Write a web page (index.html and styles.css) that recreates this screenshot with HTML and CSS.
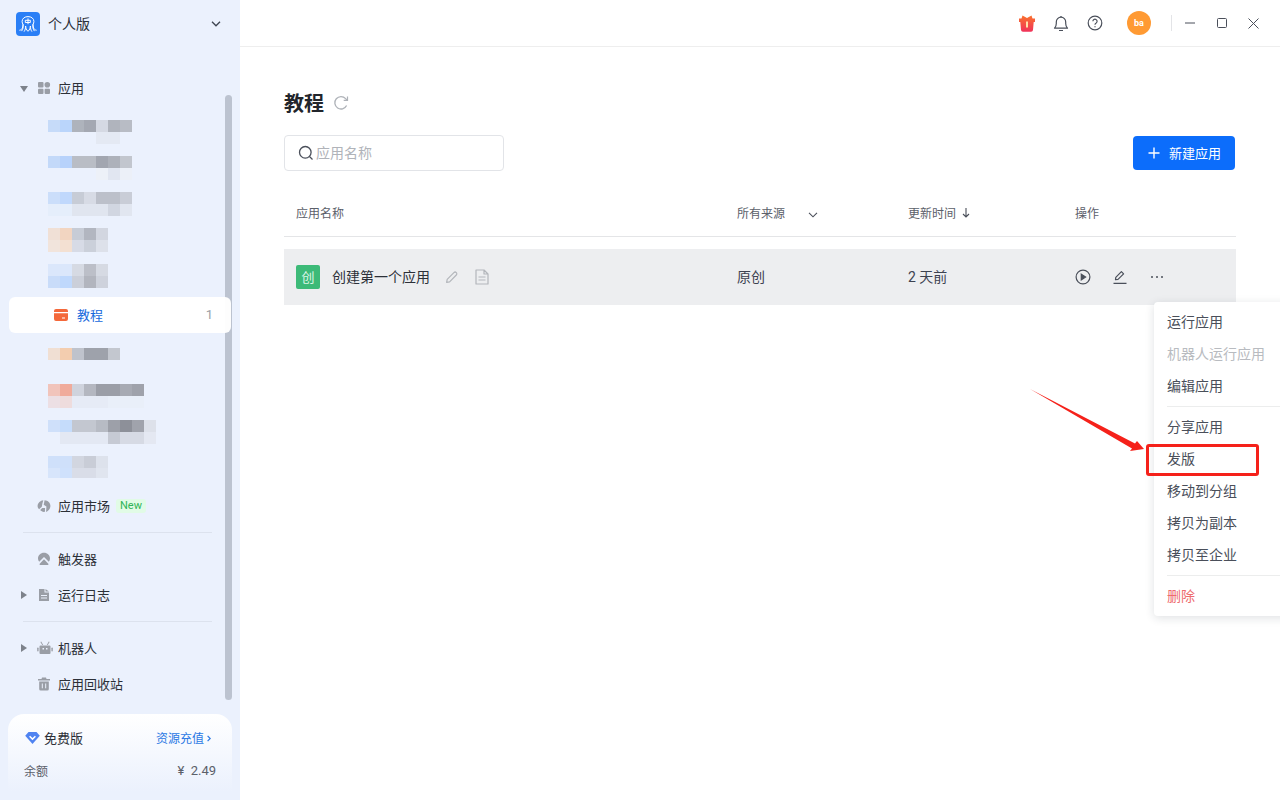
FILE: index.html
```html
<!DOCTYPE html>
<html lang="zh-CN">
<head>
<meta charset="UTF-8">
<title>教程</title>
<link rel="stylesheet" href="styles.css">
</head>
<body>
<div class="app">

	<!-- 左侧导航 -->
	<aside class="sidebar">
		<div class="brand">
			<span class="logo">
				<svg width="24" height="24" viewBox="0 0 24 24" fill="none" stroke="#fff" stroke-width="1" stroke-linecap="round" stroke-linejoin="round"><path d="M7 12.5c-.6-1-.9-2-.9-3.100C6.100 6.500 8.700 4.600 12 4.600s5.900 1.900 5.900 4.800c0 1.100-.3 2.100-.9 3.100"/><path d="M12 6.800v5M9.700 8.300h4.600v2.200H9.700z"/><path d="M3.800 18.200c1.900-.3 3-1.700 3.200-5.700.4 2.300.1 4.600-1.200 6.300M8.300 19.300c1-1.500 1.300-3.100 1.300-5.300.3 1.800.5 3.700 2.400 5.300 1.900-1.600 2.100-3.500 2.400-5.300 0 2.200.3 3.800 1.300 5.300M18.200 18.800c-1.300-1.700-1.600-4-1.200-6.300.2 4 1.300 5.400 3.200 5.700"/></svg>
			</span>
			<span class="brand-name">个人版</span>
			<svg class="brand-arrow" width="10" height="6" viewBox="0 0 10 6" fill="none" stroke="#3d4450" stroke-width="1.300"><path d="M1 .8l4 4 4-4"/></svg>
		</div>

		<nav class="nav">
			<div class="nav-row">
				<span class="tri tri-down"></span>
				<svg class="nav-icon" width="14" height="14" viewBox="0 0 14 14" fill="#9a9ea6"><rect x="1" y="1" width="5.500" height="5.500" rx="1"/><circle cx="10.300" cy="3.700" r="2.800"/><rect x="1" y="7.800" width="5.500" height="5.200" rx="1"/><rect x="7.600" y="7.800" width="5.400" height="5.200" rx="1"/></svg>
				<span>应用</span>
			</div>

			<div class="groups">
				<div class="group-row"><div class="mosaic mosaic-1"></div></div>
				<div class="group-row"><div class="mosaic mosaic-2"></div></div>
				<div class="group-row"><div class="mosaic mosaic-3"></div></div>
				<div class="group-row"><div class="mosaic mosaic-4"></div></div>
				<div class="group-row"><div class="mosaic mosaic-5"></div></div>
				<div class="group-row group-active">
					<svg width="14" height="12" viewBox="0 0 14 12"><path fill="#f4683a" d="M0 2a2 2 0 0 1 2-2h10a2 2 0 0 1 2 2v1H0zM0 4.200h14V10a2 2 0 0 1-2 2H2a2 2 0 0 1-2-2z"/><rect x="8" y="8.500" width="3" height="1" fill="#fff"/></svg>
					<span class="group-name">教程</span>
					<span class="group-count">1</span>
				</div>
				<div class="group-row group-low"><div class="mosaic mosaic-6"></div></div>
				<div class="group-row group-low"><div class="mosaic mosaic-7"></div></div>
				<div class="group-row group-low"><div class="mosaic mosaic-8"></div></div>
				<div class="group-row group-low"><div class="mosaic mosaic-9"></div></div>
			</div>

			<div class="nav-row">
				<svg class="nav-icon" width="14" height="14" viewBox="0 0 14 14" fill="#9a9ea6"><path d="M6.300 1.200C3.300 1.500.8 3.900.6 6.800c-.1 1.400.5 2.700 1.500 3.500l2.700-2.500.6-3.200zM7.600 1.300l-.9 4.400 2.700 1.700-.3 5.500c2.600-1 4.300-3.300 4.300-6.200 0-2.800-2.500-5.100-5.800-5.400zM5.200 9l-2 1.900c.9 1.100 2.300 1.800 3.800 2l.9-.1.200-3.800z"/></svg>
				<span>应用市场</span>
				<span class="tag-new">New</span>
			</div>

			<div class="nav-line"></div>

			<div class="nav-row">
				<svg class="nav-icon" width="14" height="14" viewBox="0 0 14 14" fill="#9a9ea6"><path d="M7 .8C3.600.8 1 3.300 1 6.400c0 1.300.4 2.400 1.200 3.300L7 5l4.800 4.700c.8-.9 1.200-2 1.200-3.300C13 3.300 10.400.8 7 .8z"/><path d="M7 7.300L2.500 12c0 .6.400 1 1 1h7c.6 0 1-.4 1-1z"/></svg>
				<span>触发器</span>
			</div>
			<div class="nav-row">
				<span class="tri tri-right"></span>
				<svg class="nav-icon" width="14" height="14" viewBox="0 0 14 14" fill="#9a9ea6" fill-rule="evenodd"><path d="M2 1h5.500v3.500H12V13H2zM4 7v1h6V7zm0 2.500v1h6v-1z"/><path d="M8.500 1L12 3.500H8.500z"/></svg>
				<span>运行日志</span>
			</div>

			<div class="nav-line"></div>

			<div class="nav-row">
				<span class="tri tri-right"></span>
				<svg class="nav-icon" width="16" height="14" viewBox="0 0 16 14" fill="#9a9ea6" fill-rule="evenodd"><path d="M3.500 4.500h9a1 1 0 0 1 1 1v6.500a1 1 0 0 1-1 1h-9a1 1 0 0 1-1-1V5.500a1 1 0 0 1 1-1zM5.500 7v1.500h1.500V7zm3.500 0v1.500h1.500V7z"/><rect x=".2" y="6.500" width="1.400" height="4" rx=".7"/><rect x="14.400" y="6.500" width="1.400" height="4" rx=".7"/><path d="M4.200 .6l2 3.400h-1L3.400 1zM11.800 .6l-2 3.400h1L12.600 1z"/></svg>
				<span>机器人</span>
			</div>
			<div class="nav-row">
				<svg class="nav-icon" width="14" height="14" viewBox="0 0 14 14" fill="#9a9ea6"><path d="M5 .6h4l.5 1.400H13v1.400H1V2h3.500z"/><path d="M2.200 4.500h9.600V12a1.500 1.500 0 0 1-1.500 1.500H3.700A1.500 1.500 0 0 1 2.200 12z"/><path d="M5.300 6.500v4.800M8.700 6.500v4.800" stroke="#ebf1fd" stroke-width="1"/></svg>
				<span>应用回收站</span>
			</div>
		</nav>

		<div class="scrollbar"></div>

		<div class="plan">
			<div class="plan-top">
				<svg width="15" height="12" viewBox="0 0 15 12"><path fill="#4f83f1" d="M3.500 0h8l3.300 3.700L7.500 12 .2 3.700z"/><path d="M4.600 4.300l2.900 2.800 2.900-2.800" fill="none" stroke="#fff" stroke-width="1.500"/></svg>
				<span class="plan-name">免费版</span>
				<span class="plan-link">资源充值</span>
				<svg width="4" height="7" viewBox="0 0 4 7" fill="none" stroke="#2a78e4" stroke-width="1.200"><path d="M.6.800l2.600 2.700L.6 6.200"/></svg>
			</div>
			<div class="plan-bottom">
				<span>余额</span>
				<span class="plan-money">¥ 2.49</span>
			</div>
		</div>
	</aside>

	<!-- 右侧主体 -->
	<div class="body-wrap">
		<header class="topbar">
			<svg class="top-gift" width="16" height="17" viewBox="0 0 16 17"><defs><linearGradient id="gift" x1="0" y1="0" x2="0" y2="1"><stop offset="0" stop-color="#f9722d"/><stop offset="1" stop-color="#f0325a"/></linearGradient></defs><path fill="url(#gift)" d="M3.500.5L8 3 12.500.5l1 3H16v3.500h-1.300l-.7 8a2 2 0 0 1-2 1.800H4a2 2 0 0 1-2-1.800l-.7-8H0V3.500h2.500z"/><rect x="7" y="6.500" width="2" height="6" fill="#ffe1a8"/></svg>
			<svg class="top-icon" width="16" height="17" viewBox="0 0 16 17" fill="none" stroke="#4a4f5a" stroke-width="1.200" stroke-linejoin="round"><path d="M1.500 13.200h13c-1.300-1.200-1.800-2.300-1.800-4.700V7A4.700 4.700 0 0 0 8 2.200 4.700 4.700 0 0 0 3.300 7v1.500c0 2.400-.5 3.500-1.800 4.700z"/><path d="M6 15.500h4M8 1v1.200"/></svg>
			<svg class="top-icon" width="16" height="16" viewBox="0 0 16 16" fill="none" stroke="#4a4f5a" stroke-width="1.200"><circle cx="8" cy="8" r="6.800"/><path d="M5.900 6.300a2.100 2.100 0 1 1 3.300 1.700c-.8.500-1.200 1-1.200 1.800"/><path d="M8 11.200v1.100" stroke-width="1.300"/></svg>
			<span class="avatar">ba</span>
			<span class="top-line"></span>
			<svg class="win-min" width="10" height="10" viewBox="0 0 10 10" fill="none" stroke="#4a4f5a"><path d="M0 5h10"/></svg>
			<svg class="win-max" width="10" height="10" viewBox="0 0 10 10" fill="none" stroke="#4a4f5a"><rect x=".5" y=".5" width="9" height="9" rx="1"/></svg>
			<svg class="win-close" width="11" height="11" viewBox="0 0 11 11" fill="none" stroke="#4a4f5a"><path d="M.5.500l10 10M10.500.5l-10 10"/></svg>
		</header>

		<main class="content">
			<div class="title-line">
				<h1>教程</h1>
				<svg width="16" height="16" viewBox="0 0 16 16" fill="none" stroke="#aeb2b8" stroke-width="1.300"><path d="M13.600 10.500A6.200 6.200 0 1 1 12.600 3.600L14 5"/><path d="M14.500 1.600V5.400h-3.800" stroke-width="1.200"/></svg>
			</div>

			<div class="toolbar">
				<div class="search">
					<svg width="16" height="16" viewBox="0 0 16 16" fill="none" stroke="#4a4f5a" stroke-width="1.300"><circle cx="7.300" cy="7.300" r="5.800"/><path d="M11.500 11.500l3 3"/></svg>
					<span>应用名称</span>
				</div>
				<div class="btn-new">
					<svg width="14" height="14" viewBox="0 0 14 14" stroke="#fff" stroke-width="1.400"><path d="M7 1.500v11M1.500 7h11"/></svg>
					<span>新建应用</span>
				</div>
			</div>

			<div class="table-head">
				<div class="col-name">应用名称</div>
				<div class="col-source">所有来源
					<svg width="10" height="6" viewBox="0 0 10 6" fill="none" stroke="#4a4f5a" stroke-width="1.100"><path d="M1 .8l4 4 4-4"/></svg>
				</div>
				<div class="col-time">更新时间
					<svg width="8" height="10" viewBox="0 0 8 10" fill="none" stroke="#4a4f5a" stroke-width="1.100"><path d="M4 0v9M1 6l3 3 3-3"/></svg>
				</div>
				<div class="col-op">操作</div>
			</div>

			<div class="table-row">
				<div class="col-name">
					<span class="badge">创</span>
					<span class="app-name">创建第一个应用</span>
					<svg class="row-pen" width="14" height="14" viewBox="0 0 14 14" fill="none" stroke="#b3b6bb" stroke-width="1.200" stroke-linejoin="round"><path d="M1.600 12.400l.6-3.100 6.700-6.700a1.600 1.600 0 0 1 2.400 2.400l-6.700 6.800z"/></svg>
					<svg class="row-doc" width="14" height="16" viewBox="0 0 14 16" fill="none" stroke="#b3b6bb" stroke-width="1.200" stroke-linejoin="round"><path d="M1 1h8l4 4v10H1zM9 1v4h4M3.500 8h7M3.500 11h7"/></svg>
				</div>
				<div class="col-source">原创</div>
				<div class="col-time">2 天前</div>
				<div class="col-op row-ops">
					<svg width="16" height="16" viewBox="0 0 16 16" fill="none" stroke="#4a4f5a" stroke-width="1.200"><circle cx="8" cy="8" r="6.900"/><path d="M6.300 5.200l4.300 2.800-4.300 2.800z" fill="#4a4f5a"/></svg>
					<svg width="14" height="14" viewBox="0 0 14 14" fill="none" stroke="#4a4f5a" stroke-width="1.200" stroke-linejoin="round"><path d="M2.500 9.600l.3-2.300L8.400 1.700l2.200 2.200-5.600 5.500zM.5 13.300h13"/></svg>
					<svg width="16" height="4" viewBox="0 0 16 4" fill="#4a4f5a"><circle cx="3" cy="2" r="1"/><circle cx="8" cy="2" r="1"/><circle cx="13" cy="2" r="1"/></svg>
				</div>
			</div>
		</main>
	</div>

	<!-- 更多操作菜单 -->
	<ul class="menu">
		<li>运行应用</li>
		<li class="menu-off">机器人运行应用</li>
		<li>编辑应用</li>
		<li class="menu-line"></li>
		<li>分享应用</li>
		<li>发版</li>
		<li>移动到分组</li>
		<li>拷贝为副本</li>
		<li>拷贝至企业</li>
		<li class="menu-line"></li>
		<li class="menu-del">删除</li>
	</ul>

	<!-- 标注 -->
	<svg class="mark-arrow" width="130" height="80" viewBox="0 0 130 80"><path fill="#f5211a" d="M0 0L105 54.500 107 52l7 8-14 2 2-2.500z"/></svg>
	<div class="mark-box"></div>
</div>
</body>
</html>
```

FILE: styles.css
```css
* {
	box-sizing: border-box;
}

body, h1, ul, li {
	margin: 0;
	padding: 0;
}

body {
	font-family: Roboto, "Noto Sans CJK SC", sans-serif;
	font-size: 13px;
	color: #2c3038;
	background: #fff;
}

.app {
	position: relative;
	display: flex;
	width: 1280px;
	height: 800px;
	overflow: hidden;
}

/* 左侧导航 */
.sidebar {
	position: relative;
	display: flex;
	flex-direction: column;
	flex: 0 0 240px;
	height: 800px;
	background: #ebf1fd;
}

.brand {
	display: flex;
	align-items: center;
	height: 48px;
	margin-bottom: 22px;
	padding: 0 19px 0 16px;
}

.logo {
	display: flex;
	width: 24px;
	height: 24px;
	border-radius: 4px;
	background: #2a7ff6;
}

.brand-name {
	flex: 1;
	margin-left: 8px;
	padding-bottom: 2px;
	font-size: 14px;
}

.nav {
	position: relative;
	z-index: 1;
}

.nav-row {
	position: relative;
	display: flex;
	align-items: center;
	height: 36px;
	padding: 0 0 2px 58px;
}

.nav-icon {
	position: absolute;
	left: 37px;
	top: 11px;
}

.tri {
	position: absolute;
	width: 0;
	height: 0;
	border-style: solid;
	border-color: transparent;
}

.tri-down {
	left: 20px;
	top: 16px;
	border-width: 6px 4.500px 0;
	border-top-color: #7d828b;
}

.tri-right {
	left: 21px;
	top: 14px;
	border-width: 4.500px 0 4.500px 6px;
	border-left-color: #7d828b;
}

.groups {
	margin: 11px 0;
}

.group-row {
	height: 36px;
	padding: 3px 0 0 48px;
}

.group-low {
	padding-top: 15px;
}

.group-active {
	display: flex;
	align-items: center;
	margin: 0 9px;
	padding: 0 18px 0 45px;
	border-radius: 6px;
	background: rgba(255, 255, 255, .96);
}

.group-name {
	flex: 1;
	margin-left: 9px;
	padding-bottom: 2px;
	color: #1668dc;
}

.group-count {
	padding-bottom: 2px;
	font-size: 13px;
	color: #9a9ea6;
}

.tag-new {
	margin: 2px 0 0 6px;
	padding: 0 4px;
	border-radius: 3px;
	font-size: 11px;
	line-height: 14px;
	color: #2fb457;
	background: #e1fbe6;
}

.nav-line {
	height: 1px;
	margin: 8px 28px 8px 23px;
	background: #dce2ee;
}

.scrollbar {
	position: absolute;
	left: 225px;
	top: 95px;
	width: 7px;
	height: 605px;
	border-radius: 4px;
	background: #bcc3d0;
}

/* 모자이크 처리된 그룹명 */
.mosaic {
	height: 24px;
	background-repeat: no-repeat;
	background-size: 100% 12px;
	background-position: top, bottom;
}

.mosaic-1 {
	width: 84px;
	background-image:
		linear-gradient(90deg, #c6dbf9 12px, #bad5fb 12px 24px, #aeb3bc 24px 36px, #a4a8b2 36px 48px, #d5d9e3 48px 60px, #b0b4bd 60px 72px, #b8bcc5 72px),
		linear-gradient(90deg, transparent 48px, #e4e9f3 48px 72px, transparent 72px);
}

.mosaic-2 {
	width: 84px;
	background-image:
		linear-gradient(90deg, #c3d9f9 12px, #b7d2fb 12px 24px, #b9bdc5 24px 48px, #a2a6b0 48px 60px, #adb1ba 60px 72px, #c2c6ce 72px),
		linear-gradient(90deg, transparent 48px, #edf1f8 48px 60px, #e1e6f1 60px 72px, #ecf0f8 72px);
}

.mosaic-3 {
	width: 84px;
	background-image:
		linear-gradient(90deg, #cbdefa 12px, #c0d8fc 12px 24px, #c7ccd6 24px 36px, #d7dbe5 36px 48px, #bcc0ca 48px 72px, #c9cdd7 72px),
		linear-gradient(90deg, #e5eefb 24px, #e0e5ef 24px 60px, #d1d6e1 60px 72px, #e1e6f0 72px);
}

.mosaic-4 {
	width: 60px;
	background-image:
		linear-gradient(90deg, #f0e0d6 12px, #f2d5c1 12px 24px, #c7ccd6 24px 36px, #b2b6c0 36px 48px, #d2d6e0 48px),
		linear-gradient(90deg, #f1e4dc 12px, #f3e0d2 12px 24px, #d7dbe6 24px 36px, #cbd0da 36px 48px, #dde1ea 48px);
}

.mosaic-5 {
	width: 60px;
	background-image:
		linear-gradient(90deg, #dbe7fb 24px, #d6dae3 24px 36px, #bcbfc8 36px 48px, #d6dae3 48px),
		linear-gradient(90deg, #c9dcf9 12px, #bfd8fc 12px 24px, #cbcfd9 24px 36px, #b2b5be 36px 48px, #ced2dc 48px);
}

.mosaic-6 {
	width: 72px;
	background-image:
		linear-gradient(90deg, #f0dfd3 12px, #f3cdaf 12px 24px, #bfc3cc 24px 36px, #9ea2ab 36px 60px, #c3c7cf 60px);
}

.mosaic-7 {
	width: 96px;
	background-image:
		linear-gradient(90deg, #f1c4bb 12px, #f0ab9b 12px 24px, #cfd3dd 24px 36px, #b4b7c0 36px 48px, #9b9ea7 48px 72px, #a7aab3 72px 84px, #9fa2ab 84px),
		linear-gradient(90deg, #ecdfe4 12px, #eedcdd 12px 24px, #e6ebf6 24px 60px, #e9eff9 60px);
}

.mosaic-8 {
	width: 108px;
	background-image:
		linear-gradient(90deg, #cfe0fa 12px, #c5dcfb 12px 24px, #c3c7d0 24px 48px, #b7bbc4 48px 60px, #9da0a9 60px 72px, #8d9099 72px 84px, #a0a3ac 84px 96px, #dde1ea 96px),
		linear-gradient(90deg, transparent 12px, #e3e8f3 12px 60px, #c6cad4 60px 72px, #d6dae4 72px 96px, #e4e8f2 96px);
}

.mosaic-9 {
	width: 60px;
	height: 22px;
	background-image:
		linear-gradient(90deg, #cfe0fa 24px, #d2d6e0 24px 36px, #c9cdd7 36px 48px, #dde2ec 48px),
		linear-gradient(90deg, #d7e5fb 12px, #cfe1fc 12px 24px, #d9dde8 24px 48px, #e0e5ef 48px);
}

/* 套餐 */
.plan {
	display: flex;
	flex-direction: column;
	height: 86px;
	margin: auto 8px 0;
	padding: 14px 21px 0 16px;
	border-radius: 16px 16px 0 0;
	background: linear-gradient(180deg, #fff 0%, #ebf1fd 90%);
}

.plan-top {
	display: flex;
	align-items: center;
	height: 20px;
	padding-left: 1px;
}

.plan-name {
	flex: 1;
	margin-left: 4px;
	padding-bottom: 2px;
}

.plan-link {
	margin-right: 3px;
	padding-bottom: 2px;
	font-size: 12px;
	color: #2a78e4;
}

.plan-bottom {
	display: flex;
	justify-content: space-between;
	align-items: center;
	height: 20px;
	margin: 13px -5px 0 0;
	padding-bottom: 2px;
	font-size: 12px;
	color: #5b606a;
}

.plan-money {
	font-size: 13px;
	word-spacing: 3px;
}

/* 右侧主体 */
.body-wrap {
	flex: 1;
	display: flex;
	flex-direction: column;
}

.topbar {
	display: flex;
	align-items: center;
	height: 47px;
	padding-left: 779px;
	border-bottom: 1px solid #eeeeee;
}

.top-icon {
	margin-left: 18px;
}

.avatar {
	display: flex;
	justify-content: center;
	align-items: center;
	width: 24px;
	height: 24px;
	margin-left: 24px;
	border-radius: 50%;
	font-size: 9px;
	font-weight: 700;
	color: #fff;
	background: #ff9a33;
}

.top-line {
	width: 1px;
	height: 16px;
	margin-left: 20px;
	background: #e3e4e7;
}

.win-min {
	margin-left: 13px;
}

.win-max {
	margin-left: 22px;
}

.win-close {
	margin-left: 21px;
}

.content {
	padding: 42px 44px 0;
}

.title-line {
	display: flex;
	align-items: center;
	gap: 9px;
	height: 28px;
}

h1 {
	padding-bottom: 2px;
	font-size: 20px;
	font-weight: 700;
	color: #22252b;
}

.toolbar {
	display: flex;
	justify-content: space-between;
	align-items: center;
	height: 36px;
	margin-top: 18px;
}

.search {
	display: flex;
	align-items: center;
	gap: 2px;
	width: 220px;
	height: 36px;
	padding-left: 13px;
	border: 1px solid #e2e4e8;
	border-radius: 4px;
	font-size: 14px;
	color: #b0b3b9;
}

.search span, .btn-new span {
	padding-bottom: 2px;
}

.btn-new {
	display: flex;
	align-items: center;
	gap: 8px;
	height: 34px;
	margin-right: 1px;
	padding: 0 14px;
	border-radius: 4px;
	font-size: 13px;
	color: #fff;
	background: #0c6dfb;
}

.table-head, .table-row {
	display: flex;
	align-items: center;
}

.table-head {
	height: 46px;
	margin-top: 20px;
	padding-bottom: 2px;
	border-bottom: 1px solid #e4e5e7;
	font-size: 12px;
	color: #5b606a;
}

.table-row {
	height: 56px;
	margin-top: 12px;
	font-size: 14px;
	color: #3d4250;
	background: #edeef0;
}

.col-name {
	display: flex;
	align-items: center;
	flex: 0 0 453px;
	padding-left: 12px;
}

.col-source {
	flex: 0 0 171px;
}

.table-row .col-source, .table-row .col-time {
	padding-bottom: 2px;
}

.table-head .col-source svg {
	margin-left: 20px;
}

.col-time {
	flex: 0 0 167px;
}

.table-head .col-time svg {
	margin-left: 3px;
}

.col-op {
	flex: 1;
}

.row-ops {
	display: flex;
	align-items: center;
	gap: 22px;
}

.badge {
	display: flex;
	justify-content: center;
	align-items: center;
	width: 24px;
	height: 24px;
	padding-bottom: 2px;
	border-radius: 2px;
	font-size: 13px;
	color: #dff6e9;
	background: #3dba78;
}

.app-name {
	margin-left: 12px;
	padding-bottom: 2px;
	color: #2c3038;
}

.row-pen {
	margin-left: 15px;
}

.row-doc {
	margin-left: 16px;
}

/* 下拉菜单 */
.menu {
	position: absolute;
	left: 1154px;
	top: 302px;
	width: 140px;
	padding: 4px 0;
	list-style: none;
	font-size: 14px;
	color: #4a4f5a;
	background: #fff;
	border-radius: 4px;
	box-shadow: 0 2px 10px rgba(30, 40, 60, .14);
}

.menu li {
	height: 32px;
	padding-left: 13px;
	line-height: 32px;
}

.menu .menu-line {
	height: 1px;
	margin: 4px 0 4px 13px;
	padding: 0;
	background: #eceded;
}

.menu .menu-off {
	color: #b8bbc0;
}

.menu .menu-del {
	color: #ee6a6e;
}

/* 标注 */
.mark-arrow {
	position: absolute;
	left: 1030px;
	top: 389px;
}

.mark-box {
	position: absolute;
	left: 1146px;
	top: 444px;
	width: 113px;
	height: 32px;
	border: 3px solid #f5211a;
	border-radius: 3px;
}
```
